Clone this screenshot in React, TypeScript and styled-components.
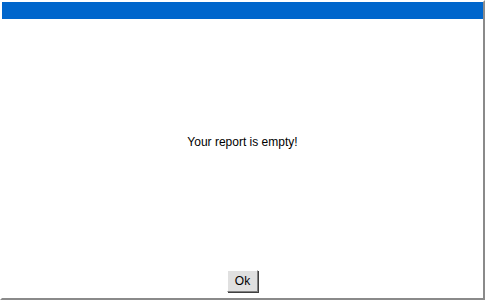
import styled, { createGlobalStyle } from "styled-components";

const GlobalStyle = createGlobalStyle`
  html, body {
    margin: 0;
    padding: 0;
    background: #ffffff;
  }
`;

export default function App() {
  return (
    <>
      <GlobalStyle />
      <Window>
        <TitleBar />
        <Message>Your report is empty!</Message>
        <Footer>
          <OkButton type="button">Ok</OkButton>
        </Footer>
      </Window>
    </>
  );
}

const Window = styled.div`
  width: 485px;
  height: 300px;
  box-sizing: border-box;
  display: flex;
  flex-direction: column;
  background: #ffffff;
  border-style: solid;
  border-width: 2px;
  border-color: #ffffff #8a8a8a #8a8a8a #ffffff;
  font-family: "Liberation Sans", Arial, sans-serif;
`;

const TitleBar = styled.div`
  height: 17px;
  flex: none;
  background: #0066cc;
`;

const Message = styled.div`
  flex: 1;
  display: flex;
  align-items: center;
  justify-content: center;
  font-size: 12px;
  color: #000000;
`;

const Footer = styled.div`
  flex: none;
  display: flex;
  justify-content: center;
  padding: 5px 0 6px;
`;

const OkButton = styled.button`
  width: 31px;
  height: 22px;
  padding: 0;
  box-sizing: border-box;
  font-family: "Liberation Sans", Arial, sans-serif;
  font-size: 12px;
  color: #000000;
  background: #e0e0e0;
  border-style: solid;
  border-width: 1px;
  border-color: #ffffff #808080 #808080 #ffffff;
  box-shadow: 1px 1px 0 #404040;
  cursor: pointer;
`;
